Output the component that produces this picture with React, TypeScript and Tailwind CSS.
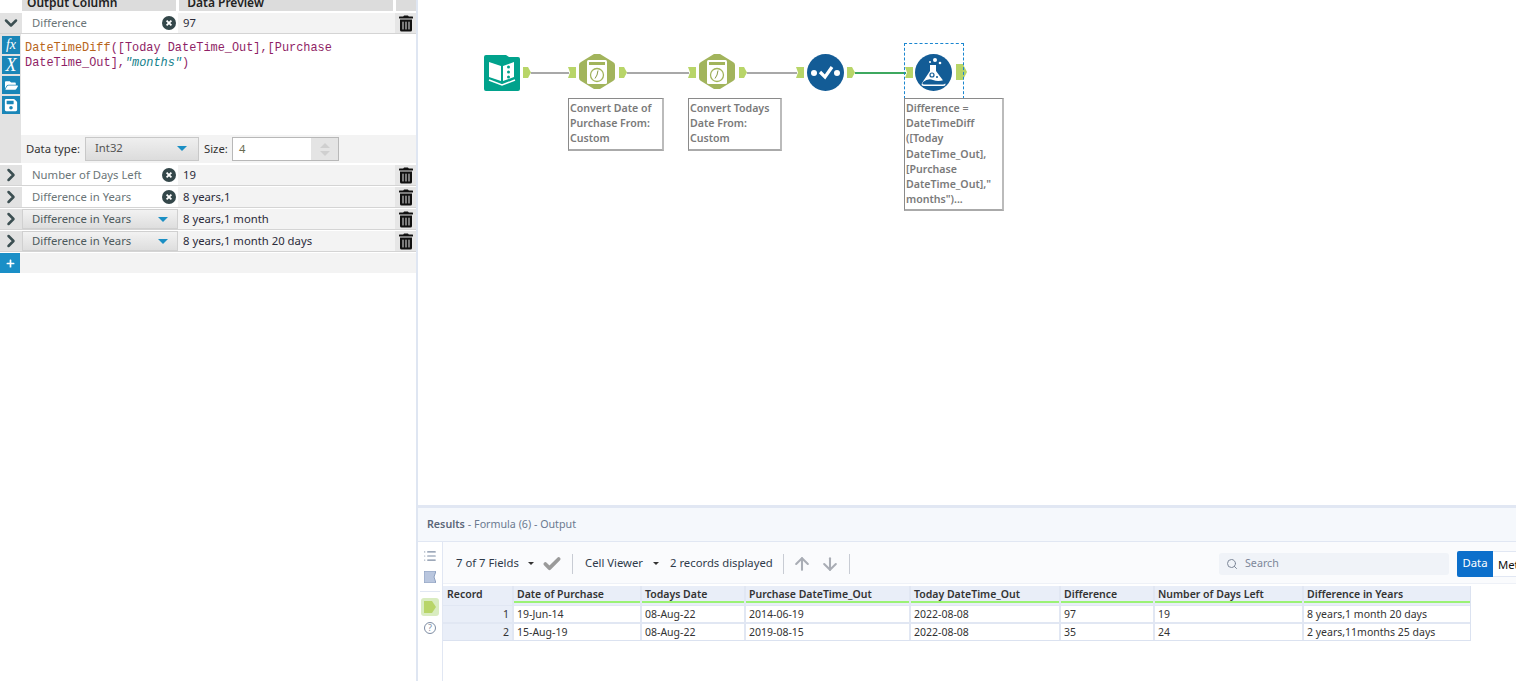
import { ArrowDown, ArrowUp, Check, ChevronDown, ChevronRight, List, Search } from 'lucide-react'
import { FaFolderOpen, FaPlus, FaSave, FaTrashAlt } from 'react-icons/fa'

const uiFont = "font-['Noto_Sans',sans-serif]"

const ClearIcon = () => (
  <svg width="14" height="14" viewBox="0 0 14 14" className="shrink-0">
    <circle cx="7" cy="7" r="7" fill="#34474a" />
    <path d="M4.6 4.6l4.8 4.8M9.4 4.6l-4.8 4.8" stroke="#fff" strokeWidth="1.8" />
  </svg>
)

const Caret = ({ color = '#1b8fc4', small }: { color?: string; small?: boolean }) => (
  <svg width={small ? 6 : 10} height={small ? 3 : 5} viewBox="0 0 10 5" className="shrink-0">
    <path d="M0 0h10L5 5z" fill={color} />
  </svg>
)

interface RowProps {
  name: string;
  preview: string;
  dropdown?: boolean;
  expanded?: boolean;
}

const FieldRow = ({ name, preview, dropdown, expanded }: RowProps) => (
  <div className={`flex h-[21px] border-b border-[#d4d4d4] bg-[#f3f3f3] ${expanded ? '' : 'mb-px'}`}>
    <div className="w-[22px] flex items-center justify-center bg-[#e2e2e2] text-[#3c4f52]">
      {expanded ? <ChevronDown size={20} strokeWidth={3} /> : <ChevronRight size={20} strokeWidth={3} />}
    </div>
    {dropdown ? (
      <div className="w-[156px] flex items-center justify-between pl-[9px] pr-[9px] bg-gradient-to-b from-[#f2f2f2] to-[#dedede] border border-[#d0d0d0] text-[#4d5a5c]">
        <span>{name}</span>
        <Caret />
      </div>
    ) : (
      <div className="w-[156px] flex items-center justify-between pl-[10px] pr-[2px] bg-white text-[#6b7577]">
        <span>{name}</span>
        <ClearIcon />
      </div>
    )}
    <div className="flex-1 flex items-center pl-[5px] text-[#2b2b3a]">{preview}</div>
    <div className="w-[21px] flex items-center justify-center bg-[#e6e6e6] text-[#111]">
      <FaTrashAlt className="w-[14px] h-[17px]" />
    </div>
  </div>
)

const SideButton = ({ children }: { children: React.ReactNode }) => (
  <div className="w-[18px] h-[18px] flex items-center justify-center bg-[#1a86b8] text-white">{children}</div>
)

const ConfigPanel = () => (
  <div className={`w-[418px] shrink-0 h-full bg-white border-r-2 border-[#dfe6f2] text-[11.3px] ${uiFont}`}>
    <div className="h-[11px] flex gap-[3px] overflow-hidden bg-white font-semibold text-[12px] text-[#222]">
      <div className="ml-[22px] w-[155px] bg-[#dcdcdc] pl-[5px] leading-[6px]">Output Column</div>
      <div className="w-[215px] bg-[#dcdcdc] pl-[8px] leading-[6px]">Data Preview</div>
      <div className="w-[20px] bg-[#dcdcdc]" />
    </div>
    <div className="pt-[2px]">
      <FieldRow name="Difference" preview="97" expanded />
    </div>
    <div className="flex h-[101px]">
      <div className="w-[21px] bg-[#e2e2e2] pl-[2px] pt-[2px] flex flex-col gap-[2px]">
        <SideButton><span className="font-['Liberation_Serif',serif] italic text-[14px] leading-none">fx</span></SideButton>
        <SideButton><span className="font-['Liberation_Serif',serif] italic text-[18px] leading-none">X</span></SideButton>
        <SideButton><FaFolderOpen size={13} /></SideButton>
        <SideButton><FaSave size={14} /></SideButton>
      </div>
      <div className="flex-1 pl-[4px] pt-[7px] font-['Liberation_Mono',monospace] text-[11.9px] leading-[15px] text-[#8f1f66]">
        <span className="text-[#b8651b]">DateTimeDiff</span>([Today DateTime_Out],[Purchase
        <br />
        DateTime_Out],<span className="italic text-[#12808a]">"months"</span>)
      </div>
    </div>
    <div className="flex h-[28px] mb-[2px]">
      <div className="w-[21px] bg-[#e2e2e2]" />
      <div className="flex-1 flex items-center bg-[#f3f3f3] text-[#333]">
        <span className="ml-[5px] w-[54px] whitespace-nowrap pt-[1px]">Data type:</span>
        <div className="ml-[5px] w-[114px] h-[24px] flex items-center justify-between pl-[9px] pr-[11px] pb-[1px] bg-gradient-to-b from-[#efefef] to-[#dcdcdc] border border-[#c8c8c8] text-[#555]">
          <span>Int32</span>
          <Caret />
        </div>
        <span className="ml-[5px] w-[23px] pt-[1px]">Size:</span>
        <div className="ml-[5px] w-[107px] h-[24px] flex bg-white border border-[#b8b8b8] text-[#6a6a50]">
          <span className="flex-1 pl-[6px] leading-[22px]">4</span>
          <div className="w-[27px] flex flex-col items-center justify-around bg-[#e4e4e4] py-[3px]">
            <svg width="10" height="5" viewBox="0 0 10 5"><path d="M0 5h10L5 0z" fill="#cfcfcf" /></svg>
            <svg width="10" height="5" viewBox="0 0 10 5"><path d="M0 0h10L5 5z" fill="#cfcfcf" /></svg>
          </div>
        </div>
      </div>
    </div>
    <FieldRow name="Number of Days Left" preview="19" />
    <FieldRow name="Difference in Years" preview="8 years,1" />
    <FieldRow name="Difference in Years" preview="8 years,1 month" dropdown />
    <FieldRow name="Difference in Years" preview="8 years,1 month 20 days" dropdown />
    <div className="h-[20px] bg-[#f3f3f3]">
      <div className="w-[20px] h-[20px] flex items-center justify-center bg-[#1a8fc7] text-white">
        <FaPlus size={9} />
      </div>
    </div>
  </div>
)

const OutAnchor = ({ x, big }: { x: number; big?: boolean }) => (
  <svg width={big ? 11 : 8} height={big ? 16 : 11} viewBox="0 0 8 11" preserveAspectRatio="none" className="absolute" style={{ left: x, top: big ? 64 : 67 }}>
    <path d="M0 0h5L8 5.500 5 11H0z" fill="#b8d568" />
  </svg>
)

const InAnchor = ({ x }: { x: number }) => (
  <svg width="8" height="11" viewBox="0 0 8 11" className="absolute" style={{ left: x, top: 67 }}>
    <path d="M0 0h8v11H0l2-5.500z" fill="#b8d568" />
  </svg>
)

const Wire = ({ x, w, green }: { x: number; w: number; green?: boolean }) => (
  <div className={`absolute top-[72px] h-[2px] ${green ? 'bg-[#3ea85f]' : 'bg-[#a8a8a8]'}`} style={{ left: x, width: w }} />
)

const DateNode = ({ x }: { x: number }) => (
  <svg width="36" height="37" viewBox="0 0 36 37" className="absolute" style={{ left: x, top: 53 }}>
    <path d="M15 1h6l13 8q2 1 2 3v13q0 2-2 3L21 36h-6L2 28q-2-1-2-3V12q0-2 2-3z" fill="#a2b45c" />
    <rect x="8" y="7" width="20" height="24" rx="1.500" fill="#fff" />
    <rect x="10" y="9" width="16" height="3" fill="#a2b45c" />
    <circle cx="18" cy="22" r="6.500" fill="none" stroke="#a2b45c" strokeWidth="1.300" />
    <path d="M18 22l1-4.500M18 22l-2 3.500" stroke="#8a9a48" strokeWidth="1" fill="none" />
  </svg>
)

const Note = ({ x, w, lines }: { x: number; w: number; lines: string[] }) => (
  <div className="absolute top-[98px] bg-white border border-[#8a8a8a] border-b-2 border-r-2 border-b-[#aaa] border-r-[#bbb] pl-[1px] pt-[2px] pb-[2px] font-semibold text-[10.6px] leading-[15.2px] text-[#7a7a7a]" style={{ left: x, width: w }}>
    {lines.map((l) => <div key={l} className="whitespace-nowrap">{l}</div>)}
  </div>
)

const Canvas = () => (
  <div className={`relative flex-1 bg-white ${uiFont}`}>
    <div className="absolute inset-0 -ml-[418px]">
      <svg width="36" height="36" viewBox="0 0 36 36" className="absolute left-[484px] top-[55px]">
        <path d="M2 0h20l3 2h9a2 2 0 0 1 2 2v30a2 2 0 0 1-2 2H2a2 2 0 0 1-2-2V2a2 2 0 0 1 2-2z" fill="#01a28c" />
        <path d="M5 7l12 4v15L5 22zM19 11l11-4v15l-11 4z" fill="#fff" />
        <path d="M5 25l13 5 13-5" fill="none" stroke="#fff" strokeWidth="1.500" />
        <circle cx="24.500" cy="12" r="1.500" fill="#01a28c" />
        <circle cx="24.500" cy="17" r="1.500" fill="#01a28c" />
        <circle cx="24.500" cy="22" r="1.500" fill="#01a28c" />
      </svg>
      <OutAnchor x={523} />
      <Wire x={531} w={38} />
      <InAnchor x={568} />
      <DateNode x={579} />
      <OutAnchor x={619} />
      <Wire x={627} w={62} />
      <InAnchor x={688} />
      <DateNode x={699} />
      <OutAnchor x={739} />
      <Wire x={747} w={50} />
      <InAnchor x={796} />
      <svg width="37" height="37" viewBox="0 0 37 37" className="absolute left-[807px] top-[54px]">
        <circle cx="18.500" cy="18.500" r="18.500" fill="#135c96" />
        <circle cx="7" cy="19" r="3" fill="#fff" />
        <circle cx="30" cy="19" r="3" fill="#fff" />
        <path d="M13 18l5 5 7-10" fill="none" stroke="#fff" strokeWidth="3.200" />
      </svg>
      <OutAnchor x={847} />
      <Wire x={855} w={51} green />
      <InAnchor x={905} />
      <svg width="37" height="37" viewBox="0 0 37 37" className="absolute left-[915px] top-[54px]">
        <circle cx="18.500" cy="18.500" r="18.500" fill="#135c96" />
        <path d="M15 11h6v6l9 12q1.500 3-2 3H9q-3.500 0-2-3l8-12z" fill="#fff" />
        <path d="M8 28q5-4 10-2t11 0l1 2q.5 2.500-2 2.500H9q-2.500 0-1-2.500z" fill="#135c96" />
        <circle cx="17" cy="21" r="2" fill="none" stroke="#135c96" strokeWidth="1.200" />
        <circle cx="22" cy="23" r="1" fill="#135c96" />
        <circle cx="20" cy="6" r="2" fill="#fff" />
        <circle cx="25" cy="9" r="1.300" fill="#fff" />
        <circle cx="15" cy="8" r="1" fill="#fff" />
      </svg>
      <OutAnchor x={956} big />
      <div className="absolute left-[904px] top-[43px] w-[60px] h-[56px] border border-dashed border-[#1a86d0]" />
      <Note x={568} w={96} lines={['Convert Date of', 'Purchase From:', 'Custom']} />
      <Note x={688} w={94} lines={['Convert Todays', 'Date From:', 'Custom']} />
      <Note x={904} w={100} lines={['Difference =', 'DateTimeDiff', '([Today', 'DateTime_Out],', '[Purchase', 'DateTime_Out],"', 'months")...']} />
    </div>
  </div>
)

const columns = [
  { title: 'Date of Purchase', w: 'w-[126px]', a: '19-Jun-14', b: '15-Aug-19' },
  { title: 'Todays Date', w: 'w-[102px]', a: '08-Aug-22', b: '08-Aug-22' },
  { title: 'Purchase DateTime_Out', w: 'w-[163px]', a: '2014-06-19', b: '2019-08-15' },
  { title: 'Today DateTime_Out', w: 'w-[148px]', a: '2022-08-08', b: '2022-08-08' },
  { title: 'Difference', w: 'w-[92px]', a: '97', b: '35' },
  { title: 'Number of Days Left', w: 'w-[147px]', a: '19', b: '24' },
  { title: 'Difference in Years', w: 'w-[166px]', a: '8 years,1 month 20 days', b: '2 years,11months 25 days' },
]

const ResultsTable = () => (
  <div className="mt-[2px] w-fit flex gap-[2px] bg-[#e1e7f3] border-b border-r border-[#dbe2f0] text-[10.5px] text-[#333]">
    <div className="w-[69px]">
      <div className="h-[19px] pl-[4px] font-semibold leading-[17px] bg-[#e9eef8] mb-[1px]">Record</div>
      <div className="h-[16px] pr-[3px] text-right leading-[16px] bg-[#e9eef8] mb-[2px]">1</div>
      <div className="h-[16px] pr-[3px] text-right leading-[16px] bg-[#e9eef8]">2</div>
    </div>
    {columns.map((c) => (
      <div key={c.title} className={`${c.w} shrink-0`}>
        <div className="h-[19px] pl-[3px] font-semibold leading-[16px] bg-[#e9eef8] mb-[1px] whitespace-nowrap">
          <div className="h-[15px] border-b-[2px] border-[#9bf275] box-content -ml-[3px] pl-[3px]">{c.title}</div>
        </div>
        <div className="h-[16px] pl-[3px] leading-[16px] bg-white mb-[2px] whitespace-nowrap">{c.a}</div>
        <div className="h-[16px] pl-[3px] leading-[16px] bg-white whitespace-nowrap">{c.b}</div>
      </div>
    ))}
  </div>
)

const Results = () => (
  <div className={`h-[176px] shrink-0 flex flex-col border-t-[3px] border-[#e1e7f3] text-[10.7px] overflow-hidden ${uiFont}`}>
    <div className="h-[34px] shrink-0 flex items-center pl-[9px] bg-[#f5f8fc] border-b border-[#e1e7f3] text-[#6b7a90]">
      <span className="font-semibold text-[#5a6678]">Results</span>
      <span className="ml-[3px]">- Formula (6) - Output</span>
    </div>
    <div className="flex-1 flex">
      <div className="w-[25px] shrink-0 border-r border-[#e1e7f3] flex flex-col items-center pt-[7px] text-[#7d8ca3]">
        <List size={14} />
        <svg width="12" height="12" viewBox="0 0 12 12" className="mt-[8px]">
          <path d="M0 0h12L10 6l2 6H0z" fill="#b9c6de" stroke="#8ea0bf" />
        </svg>
        <div className="mt-[8px] w-[20px] h-px bg-[#e1e7f3]" />
        <div className="mt-[6px] w-[18px] h-[18px] rounded-[3px] bg-[#d9ecc0] flex items-center justify-center">
          <svg width="12" height="12" viewBox="0 0 12 12"><path d="M0 0h8l4 6-4 6H0z" fill="#b8d568" /></svg>
        </div>
        <div className="mt-[6px] w-[12px] h-[12px] rounded-full border border-[#7d8ca3] text-[9px] leading-[10px] text-center">?</div>
      </div>
      <div className="flex-1 min-w-0">
        <div className="h-[42px] pt-[2px] flex items-center bg-[#fafbfd] border-b border-[#eef1f7] text-[11.3px] text-[#2f3a4a]">
          <span className="ml-[13px] w-[63px] whitespace-nowrap">7 of 7 Fields</span>
          <span className="ml-[9px]"><Caret color="#333" small /></span>
          <Check size={20} strokeWidth={4.5} className="ml-[8px] text-[#9a9a9a]" />
          <div className="ml-[10px] w-px h-[20px] bg-[#c8ccd4]" />
          <span className="ml-[12px] w-[60px] whitespace-nowrap">Cell Viewer</span>
          <span className="ml-[8px]"><Caret color="#333" small /></span>
          <span className="ml-[11px] w-[102px] whitespace-nowrap">2 records displayed</span>
          <div className="ml-[11px] w-px h-[20px] bg-[#c8ccd4]" />
          <ArrowUp size={20} strokeWidth={2.5} className="ml-[8px] text-[#a9adb5]" />
          <ArrowDown size={20} strokeWidth={2.5} className="ml-[8px] text-[#a9adb5]" />
          <div className="ml-[9px] w-px h-[20px] bg-[#c8ccd4]" />
          <div className="ml-auto w-[230px] h-[22px] flex items-center gap-[7px] pl-[7px] rounded-[3px] bg-[#f0f3f8] text-[#7d8798] text-[10.7px]">
            <Search size={12} />
            <span>Search</span>
          </div>
          <div className="ml-[8px] w-[36px] h-[26px] flex items-center justify-center rounded-l-[2px] bg-[#0c6fcb] text-white">Data</div>
          <div className="w-[23px] h-[26px] overflow-hidden pl-[5px] leading-[26px] bg-white border-y border-[#e1e7f3] text-[#111]">Metadata</div>
        </div>
        <ResultsTable />
      </div>
    </div>
  </div>
)

export default function App() {
  return (
    <div className="flex w-[1516px] h-[681px] overflow-hidden bg-white">
      <ConfigPanel />
      <div className="flex-1 min-w-0 flex flex-col">
        <Canvas />
        <Results />
      </div>
    </div>
  )
}
